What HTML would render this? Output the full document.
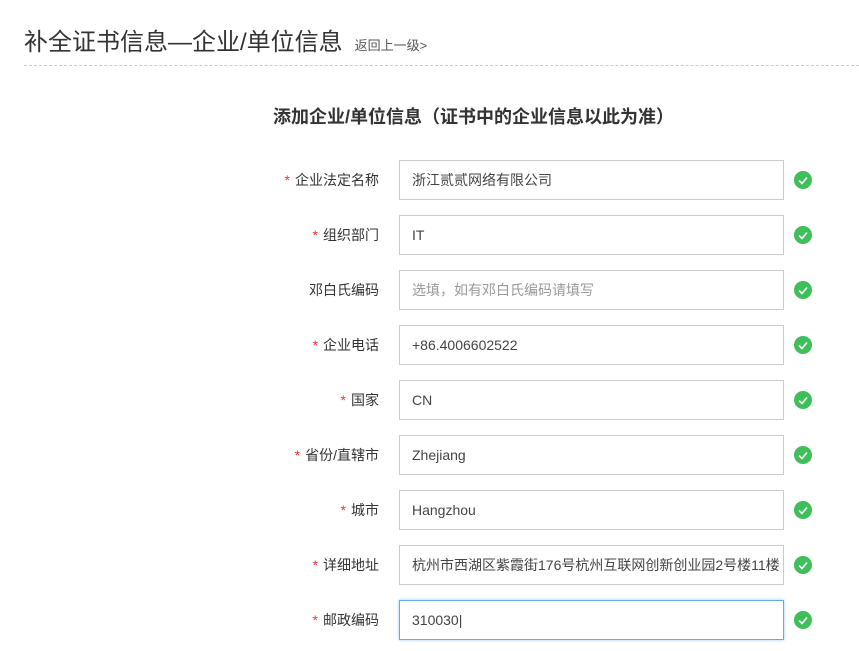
<!DOCTYPE html>
<html><head><meta charset="utf-8"><style>
body{margin:0;width:859px;height:651px;overflow:hidden;background:#fff;font-family:"Liberation Sans","Noto Sans CJK SC",sans-serif;color:#333}
.t{position:absolute;left:24px;top:22px;font-size:24px;color:#333;white-space:nowrap}
.t small{font-size:13px;color:#555;margin-left:12px}
.line{position:absolute;left:24px;right:0;top:65px;border-top:1px dashed #ccc}
.sub{position:absolute;left:273px;top:103px;font-size:18px;font-weight:bold;color:#333;white-space:nowrap}
.row{position:absolute;left:0;width:859px;height:40px}
.lab{position:absolute;right:480px;top:0;line-height:40px;font-size:14px;color:#333;white-space:nowrap}
.lab i{color:#e33;font-style:normal;margin-right:5px;font-size:14px}
.in{position:absolute;left:399px;top:0;border:1px solid #ccc;line-height:38px;padding-left:12px;box-sizing:border-box;width:385px;height:40px;font-size:14px;color:#444;white-space:nowrap;overflow:hidden}
.ph{color:#999}
.ok{position:absolute;left:794px;top:11px;width:18px;height:18px;border-radius:50%;background:#3fbf5a}
.ok svg{position:absolute;left:0;top:0}
.foc{border-color:#66aaee;box-shadow:0 0 3px #9cc8f0}
</style></head><body>
<div class="t">补全证书信息—企业/单位信息<small>返回上一级&gt;</small></div>
<div class="line"></div>
<div class="sub">添加企业/单位信息（证书中的企业信息以此为准）</div>

<div class="row" style="top:160px"><div class="lab"><i>*</i>企业法定名称</div><div class="in">浙江贰贰网络有限公司</div><div class="ok"><svg width="18" height="18"><path d="M5 9.5l3 3 5-6" fill="none" stroke="#fff" stroke-width="1.6"/></svg></div></div>
<div class="row" style="top:215px"><div class="lab"><i>*</i>组织部门</div><div class="in">IT</div><div class="ok"><svg width="18" height="18"><path d="M5 9.5l3 3 5-6" fill="none" stroke="#fff" stroke-width="1.6"/></svg></div></div>
<div class="row" style="top:270px"><div class="lab">邓白氏编码</div><div class="in ph">选填，如有邓白氏编码请填写</div><div class="ok"><svg width="18" height="18"><path d="M5 9.5l3 3 5-6" fill="none" stroke="#fff" stroke-width="1.6"/></svg></div></div>
<div class="row" style="top:325px"><div class="lab"><i>*</i>企业电话</div><div class="in">+86.4006602522</div><div class="ok"><svg width="18" height="18"><path d="M5 9.5l3 3 5-6" fill="none" stroke="#fff" stroke-width="1.6"/></svg></div></div>
<div class="row" style="top:380px"><div class="lab"><i>*</i>国家</div><div class="in">CN</div><div class="ok"><svg width="18" height="18"><path d="M5 9.5l3 3 5-6" fill="none" stroke="#fff" stroke-width="1.6"/></svg></div></div>
<div class="row" style="top:435px"><div class="lab"><i>*</i>省份/直辖市</div><div class="in">Zhejiang</div><div class="ok"><svg width="18" height="18"><path d="M5 9.5l3 3 5-6" fill="none" stroke="#fff" stroke-width="1.6"/></svg></div></div>
<div class="row" style="top:490px"><div class="lab"><i>*</i>城市</div><div class="in">Hangzhou</div><div class="ok"><svg width="18" height="18"><path d="M5 9.5l3 3 5-6" fill="none" stroke="#fff" stroke-width="1.6"/></svg></div></div>
<div class="row" style="top:545px"><div class="lab"><i>*</i>详细地址</div><div class="in">杭州市西湖区紫霞街176号杭州互联网创新创业园2号楼11楼</div><div class="ok"><svg width="18" height="18"><path d="M5 9.5l3 3 5-6" fill="none" stroke="#fff" stroke-width="1.6"/></svg></div></div>
<div class="row" style="top:600px"><div class="lab"><i>*</i>邮政编码</div><div class="in foc">310030|</div><div class="ok"><svg width="18" height="18"><path d="M5 9.5l3 3 5-6" fill="none" stroke="#fff" stroke-width="1.6"/></svg></div></div>
</body></html>
